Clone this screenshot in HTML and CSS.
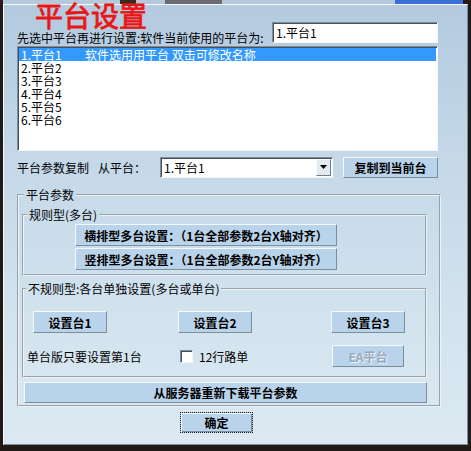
FILE: index.html
```html
<!DOCTYPE html>
<html lang="zh-CN">
<head>
<meta charset="utf-8">
<title>平台设置</title>
<link rel="stylesheet" href="styles.css">
</head>
<body>
<div class="topstrip"></div>
<div class="dialog">
  <div class="head">
    <div class="head-left">
      <div class="title">平台设置</div>
      <div class="prompt">先选中平台再进行设置:软件当前使用的平台为:</div>
    </div>
    <div class="field current">1.平台1</div>
  </div>
  <div class="list">
    <div class="item selected"><span class="name">1.平台1</span><span>软件选用用平台 双击可修改名称</span></div>
    <div class="item">2.平台2</div>
    <div class="item">3.平台3</div>
    <div class="item">4.平台4</div>
    <div class="item">5.平台5</div>
    <div class="item">6.平台6</div>
  </div>
  <div class="copyrow">
    <span class="copy-label">平台参数复制</span>
    <span class="from-label">从平台：</span>
    <div class="combo">
      <span class="combo-text">1.平台1</span>
      <span class="combo-btn"><svg width="7" height="4" viewBox="0 0 7 4"><path d="M0 0h7L3.5 4z" fill="#000"/></svg></span>
    </div>
    <button class="btn copy-btn">复制到当前台</button>
  </div>
  <fieldset class="group outer">
    <legend>平台参数</legend>
    <fieldset class="group regular">
      <legend>规则型(多台)</legend>
      <button class="btn wide">横排型多台设置：（1台全部参数2台X轴对齐）</button>
      <button class="btn wide second">竖排型多台设置：（1台全部参数2台Y轴对齐）</button>
    </fieldset>
    <fieldset class="group irregular">
      <legend>不规则型:各台单独设置(多台或单台)</legend>
      <div class="row">
        <button class="btn set b1">设置台1</button>
        <button class="btn set b2">设置台2</button>
        <button class="btn set b3">设置台3</button>
      </div>
      <div class="row r2">
        <span class="single">单台版只要设置第1台</span>
        <span class="check"></span>
        <span class="check-label">12行路单</span>
        <button class="btn set ea" disabled>EA平台</button>
      </div>
    </fieldset>
    <button class="btn download">从服务器重新下载平台参数</button>
  </fieldset>
  <button class="btn ok">确定</button>
</div>
</body>
</html>
```
FILE: styles.css
```css
html, body {
  margin: 0;
  padding: 0;
}
body {
  width: 471px;
  height: 451px;
  overflow: hidden;
  background: #221a17;
  font-family: "Noto Sans CJK SC", sans-serif;
  font-size: 12px;
  color: #000;
}
.topstrip {
  height: 4px;
  background: linear-gradient(to right, #3a1c16 0 3px, #b4cadc 3px 120px, #3a2a1f 120px 136px, #b4cadc 136px 165px, #6b6a70 165px 222px, #b4cadc 222px 395px, #3a6fd6 395px 463px, #2a1a16 463px);
}
.dialog {
  box-sizing: border-box;
  width: 465px;
  height: 441px;
  margin-left: 3px;
  border: 1px solid;
  border-color: #f5f9fc #7d8e9c #7d8e9c #f5f9fc;
  background: linear-gradient(180deg, #b3cadf 0%, #c4d8e8 35%, #d2e3ee 70%, #dce9f2 100%);
  padding: 0 26px 0 13px;
}
.head {
  display: flex;
  align-items: flex-end;
}
.head-left {
  flex: 1;
}
.title {
  margin: -3px 0 0 18px;
  font-size: 28px;
  font-weight: normal;
  line-height: 27px;
  color: #ea1616;
  -webkit-text-stroke: 0.8px #ea1616;
}
.prompt {
  margin-top: 2px;
  line-height: 14px;
  white-space: nowrap;
}
.field {
  box-sizing: border-box;
  background: #fff;
  border: 1px solid;
  border-color: #7f8b96 #f3f7fa #f3f7fa #7f8b96;
  box-shadow: inset 1px 1px 0 #45505a;
}
.current {
  width: 166px;
  height: 21px;
  margin: 0 3px 2px 0;
  padding-left: 3px;
  line-height: 19px;
  white-space: nowrap;
}
.list {
  box-sizing: border-box;
  width: 421px;
  height: 105px;
  margin-top: 1px;
  padding: 1px;
  background: #fff;
  border: 1px solid;
  border-color: #7f8b96 #f3f7fa #f3f7fa #7f8b96;
  box-shadow: inset 1px 1px 0 #45505a;
}
.item {
  height: 13px;
  line-height: 13px;
  padding-left: 2px;
  white-space: nowrap;
}
.selected {
  background: #3399ff;
  color: #fff;
}
.name {
  display: inline-block;
  width: 64px;
}
.copyrow {
  display: flex;
  align-items: center;
  height: 22px;
  margin-top: 5px;
}
.copy-label {
  width: 81px;
}
.from-label {
  width: 62px;
}
.combo {
  box-sizing: border-box;
  width: 173px;
  height: 21px;
  display: flex;
  padding: 1px;
  background: #fff;
  border: 1px solid;
  border-color: #7f8b96 #f3f7fa #f3f7fa #7f8b96;
  box-shadow: inset 1px 1px 0 #45505a;
}
.combo-text {
  flex: 1;
  padding-left: 2px;
  line-height: 17px;
}
.combo-btn {
  box-sizing: border-box;
  width: 15px;
  display: flex;
  align-items: center;
  justify-content: center;
  background: #e3eaf0;
  border: 1px solid;
  border-color: #fbfdfe #6d7d8a #6d7d8a #fbfdfe;
}
.btn {
  display: block;
  box-sizing: border-box;
  margin: 0;
  padding: 0;
  font-family: "Noto Sans CJK SC", sans-serif;
  font-size: 12px;
  font-weight: bold;
  color: #000;
  background: #b9d3ea;
  border: 1px solid;
  border-color: #f4f9fc #7b8e9e #7b8e9e #f4f9fc;
  white-space: nowrap;
}
.copy-btn {
  width: 95px;
  height: 21px;
  margin-left: 10px;
}
.group {
  box-sizing: border-box;
  margin: 0;
  padding: 0;
  min-width: 0;
  border: 2px groove #eaf3fa;
}
.group > legend {
  padding: 0 2px;
  line-height: 14px;
  font-size: 12px;
}
.outer {
  width: 424px;
  margin-top: 10px;
  padding-bottom: 2px;
}
.outer > legend {
  margin-left: 5px;
}
.regular {
  width: 405px;
  margin: 6px 0 0 3px;
  padding: 2px 0 4px 0;
}
.regular > legend {
  margin-left: 3px;
}
.wide {
  width: 262px;
  height: 22px;
  margin-left: 51px;
}
.second {
  margin-top: 2px;
}
.irregular {
  width: 405px;
  margin: 6px 0 0 3px;
  padding: 15px 0 9px 0;
}
.irregular > legend {
  margin-left: 2px;
}
.row {
  display: flex;
  align-items: center;
  height: 22px;
}
.r2 {
  margin-top: 12px;
}
.set {
  width: 74px;
  height: 22px;
}
.b1 { margin-left: 9px; }
.b2 { margin-left: 71px; }
.b3 { margin-left: 79px; }
.single {
  width: 153px;
  margin-left: 3px;
}
.check {
  box-sizing: border-box;
  width: 13px;
  height: 13px;
  background: #fff;
  border: 1px solid;
  border-color: #7f8b96 #f3f7fa #f3f7fa #7f8b96;
  box-shadow: inset 1px 1px 0 #45505a;
}
.check-label {
  margin-left: 6px;
}
.ea {
  width: 72px;
  margin-left: auto;
  margin-right: 21px;
}
.ea:disabled {
  color: #98aabb;
  text-shadow: 1px 1px 0 #eef5fa;
}
.download {
  width: 403px;
  height: 21px;
  margin: 4px 0 0 5px;
}
.ok {
  width: 73px;
  height: 21px;
  margin: 5px 0 0 163px;
  border: 1px dotted #1a1a1a;
  box-shadow: inset 1px 1px 0 #f4f9fc, inset -1px -1px 0 #7b8e9e;
}
```
